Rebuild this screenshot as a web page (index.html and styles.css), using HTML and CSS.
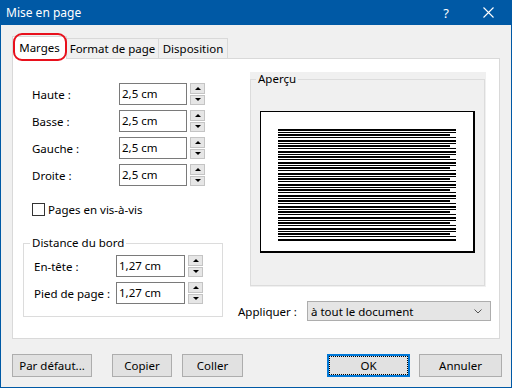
FILE: index.html
```html
<!DOCTYPE html>
<html lang="fr">
<head>
  <meta charset="UTF-8">
  <title>Mise en page</title>
  <link rel="stylesheet" href="styles.css">
</head>
<body>
  <div class="window">
    <!-- Title bar -->
    <div class="titlebar">
      <span class="title">Mise en page</span>
      <span class="help">?</span>
      <svg class="close" width="11" height="11" viewBox="0 0 11 11">
        <path d="M0.5 0.5 L10.5 10.5 M10.5 0.5 L0.5 10.5" stroke="#fff" stroke-width="1.1" fill="none"/>
      </svg>
    </div>

    <div class="content">
      <!-- Tabs -->
      <div class="tabs">
        <div class="tab active">Marges<span class="mark"></span></div>
        <div class="tab tab-format">Format de page</div>
        <div class="tab tab-dispo">Disposition</div>
      </div>

      <div class="panel">
        <div class="col-left">
          <div class="fields">
            <div class="row">
              <span class="label">Haute :</span>
              <div class="input">2,5 cm</div>
              <div class="spin"><span class="up"></span><span class="down"></span></div>
            </div>
            <div class="row">
              <span class="label">Basse :</span>
              <div class="input">2,5 cm</div>
              <div class="spin"><span class="up"></span><span class="down"></span></div>
            </div>
            <div class="row">
              <span class="label">Gauche :</span>
              <div class="input">2,5 cm</div>
              <div class="spin"><span class="up"></span><span class="down"></span></div>
            </div>
            <div class="row">
              <span class="label">Droite :</span>
              <div class="input">2,5 cm</div>
              <div class="spin"><span class="up"></span><span class="down"></span></div>
            </div>
          </div>

          <label class="check"><span class="box"></span>Pages en vis-à-vis</label>

          <fieldset class="group">
            <legend>Distance du bord</legend>
            <div class="row row-small">
              <span class="label">En-tête :</span>
              <div class="input">1,27 cm</div>
              <div class="spin"><span class="up"></span><span class="down"></span></div>
            </div>
            <div class="row row-small">
              <span class="label">Pied de page :</span>
              <div class="input">1,27 cm</div>
              <div class="spin"><span class="up"></span><span class="down"></span></div>
            </div>
          </fieldset>
        </div>

        <div class="col-right">
          <div class="preview-wrap">
            <fieldset class="preview">
              <legend>Aperçu</legend>
              <div class="page">
                <svg class="lines" width="178" height="113" viewBox="0 0 178 113">
                  <defs>
                    <pattern id="txt" width="178" height="11" patternUnits="userSpaceOnUse">
                      <rect x="0" y="0" width="178" height="2" fill="#000"/>
                      <rect x="0" y="3" width="178" height="1" fill="#000"/>
                      <rect x="0" y="5" width="172" height="2" fill="#000"/>
                      <rect x="0" y="8" width="178" height="1" fill="#000"/>
                    </pattern>
                  </defs>
                  <rect width="178" height="113" fill="url(#txt)"/>
                </svg>
              </div>
            </fieldset>
          </div>

          <div class="apply">
            <span class="apply-label">Appliquer :</span>
            <div class="select">
              <span>à tout le document</span>
              <svg width="8" height="5" viewBox="0 0 8 5">
                <path d="M0.5 0.5 L4 4 L7.5 0.5" stroke="#555" fill="none"/>
              </svg>
            </div>
          </div>
        </div>
      </div>

      <!-- Dialog buttons -->
      <div class="buttons">
        <button class="btn btn-default">Par défaut...</button>
        <button class="btn btn-copy">Copier</button>
        <button class="btn btn-paste">Coller</button>
        <button class="btn btn-ok">OK</button>
        <button class="btn btn-cancel">Annuler</button>
      </div>
    </div>
  </div>
</body>
</html>
```

FILE: styles.css
```css
/* Base */
body {
  margin: 0;
  font-family: "Noto Sans", "Open Sans", sans-serif;
  font-size: 11.5px;
  color: #000;
}

/* Window frame */
.window {
  width: 512px;
  height: 388px;
  box-sizing: border-box;
  border: 1px solid #0059a5;
  border-top: 0;
  background: #f0f0f0;
}

.titlebar {
  height: 25px;
  background: #0059a5;
  color: #fff;
  display: flex;
  align-items: center;
  padding: 0 17px 0 5px;
}

.title {
  font-size: 12px;
}

.help {
  margin-left: auto;
  margin-right: 34px;
  font-size: 13px;
}

.close {
  display: block;
}

.content {
  padding: 11px 11px 0 11px;
}

/* Tabs */
.tabs {
  display: flex;
  align-items: flex-start;
  height: 22px;
}

.tab {
  box-sizing: border-box;
  height: 20px;
  margin-top: 2px;
  border: 1px solid #d9d9d9;
  border-bottom: 0;
  background: #f0f0f0;
  text-align: center;
  line-height: 19px;
}

.tab.active {
  position: relative;
  z-index: 1;
  width: 55px;
  height: 23px;
  margin-top: 0;
  background: #fff;
  line-height: 21px;
}

.tab-format {
  width: 93px;
  margin-left: -1px;
}

.tab-dispo {
  width: 70px;
  margin-left: -1px;
}

/* red highlight drawn around the active tab */
.mark {
  position: absolute;
  left: 0;
  top: -4px;
  width: 54px;
  height: 28px;
  box-sizing: border-box;
  border: 2px solid #e8101c;
  border-radius: 9px;
}

/* Panel */
.panel {
  height: 281px;
  box-sizing: border-box;
  border: 1px solid #d9d9d9;
  background: #fff;
  display: flex;
}

.col-left {
  width: 225px;
  box-sizing: border-box;
  padding: 24px 0 0 19px;
}

.fields {
  display: flex;
  flex-direction: column;
  gap: 5px;
}

.row {
  display: grid;
  grid-template-columns: 84px 68px 15px;
  column-gap: 3px;
  align-items: center;
  height: 22px;
}

.row-small {
  grid-template-columns: 79px 69px 15px;
}

.input {
  box-sizing: border-box;
  height: 22px;
  border: 1px solid #7a7a7a;
  background: #fff;
  padding-left: 2px;
  line-height: 20px;
}

.spin {
  display: flex;
  flex-direction: column;
  height: 22px;
  gap: 1px;
}

.spin span {
  flex: 1;
  box-sizing: border-box;
  border: 1px solid #c4c4c4;
  background: #e6e6e6;
  display: flex;
  align-items: center;
  justify-content: center;
}

.spin .up::before {
  content: "";
  border-left: 3px solid transparent;
  border-right: 3px solid transparent;
  border-bottom: 3px solid #000;
}

.spin .down::before {
  content: "";
  border-left: 3px solid transparent;
  border-right: 3px solid transparent;
  border-top: 3px solid #000;
}

/* Checkbox */
.check {
  display: flex;
  align-items: center;
  gap: 3px;
  margin-top: 17px;
  height: 13px;
}

.check .box {
  width: 13px;
  height: 13px;
  box-sizing: border-box;
  border: 1px solid #333;
  background: #fff;
}

/* Group box */
.group {
  width: 200px;
  box-sizing: border-box;
  margin: 19px 0 0 -9px;
  padding: 4px 0 12px 10px;
  border: 1px solid #dcdcdc;
}

.group legend,
.preview legend {
  padding: 0 2px;
  margin-left: -4px;
  line-height: 16px;
}

.group .row + .row {
  margin-top: 5px;
}

/* Preview */
.col-right {
  width: 253px;
  padding-top: 13px;
}

.preview-wrap {
  width: 236px;
  height: 215px;
  margin-left: 12px;
  background: #f0f0f0;
}

.preview {
  height: 214px;
  box-sizing: border-box;
  margin: 0 1px 0 0;
  padding: 25px 5px 0;
  border: 1px solid #dcdcdc;
}

.preview legend {
  margin-left: 0;
  line-height: 14px;
}

.page {
  width: 215px;
  height: 142px;
  box-sizing: border-box;
  margin: 0 auto;
  border: 1px solid #000;
  border-right-width: 2px;
  border-bottom-width: 2px;
  background: #fff;
}

.lines {
  display: block;
  margin: 17px 0 0 17px;
}

/* Apply to */
.apply {
  display: flex;
  align-items: center;
  margin-top: 14px;
}

.apply-label {
  width: 69px;
}

.select {
  width: 184px;
  height: 20px;
  box-sizing: border-box;
  border: 1px solid #adadad;
  background: #e5e5e5;
  display: flex;
  align-items: center;
  justify-content: space-between;
  padding: 0 8px 0 3px;
}

/* Buttons */
.buttons {
  display: flex;
  margin: 15px -2px 0 0;
}

.btn {
  height: 23px;
  box-sizing: border-box;
  border: 1px solid #adadad;
  background: #e1e1e1;
  font-family: inherit;
  font-size: inherit;
  color: #000;
  padding: 0;
}

.btn-default {
  width: 80px;
  margin-right: 20px;
}

.btn-copy {
  width: 60px;
  margin-right: 10px;
}

.btn-paste {
  width: 61px;
}

.btn-ok {
  width: 83px;
  margin-left: auto;
  margin-right: 9px;
  border: 2px solid #0078d7;
  outline: 1px dotted #000;
  outline-offset: -3px;
}

.btn-cancel {
  width: 83px;
}
```
